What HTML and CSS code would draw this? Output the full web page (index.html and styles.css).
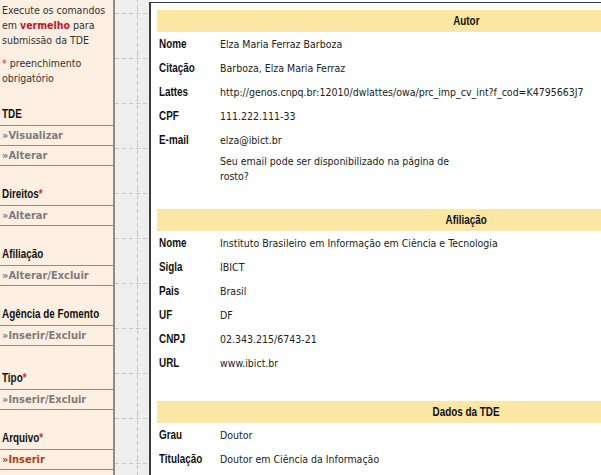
FILE: index.html
```html
<!DOCTYPE html>
<html lang="pt-BR">
<head>
<meta charset="utf-8">
<title>Submissão da TDE</title>
<link rel="stylesheet" href="styles.css">
</head>
<body>
<div class="page">
  <aside class="sidebar">
    <p class="intro">Execute os comandos<br>em <b class="red">vermelho</b> para<br>submissão da TDE</p>
    <p class="intro gap"><span class="ast">*</span> preenchimento<br>obrigatório</p>

    <div class="group-title"><span class="nw">TDE</span></div>
    <ul class="links"><li>»Visualizar</li><li>»Alterar</li></ul>

    <div class="group-title"><span class="nw">Direitos<span class="ast">*</span></span></div>
    <ul class="links"><li>»Alterar</li></ul>

    <div class="group-title"><span class="nw">Afiliação</span></div>
    <ul class="links"><li>»Alterar/Excluir</li></ul>

    <div class="group-title"><span class="nw">Agência de Fomento</span></div>
    <ul class="links"><li>»Inserir/Excluir</li></ul>

    <div class="group-title tall"><span class="nw">Tipo<span class="ast">*</span></span></div>
    <ul class="links"><li>»Inserir/Excluir</li></ul>

    <div class="group-title"><span class="nw">Arquivo<span class="ast">*</span></span></div>
    <ul class="links"><li class="todo">»Inserir</li></ul>
  </aside>

  <div class="gutter">
    <svg class="grid" width="100%" height="100%" aria-hidden="true">
      <defs>
        <pattern id="dash" width="34" height="45" patternUnits="userSpaceOnUse" y="8">
          <line x1="0" y1="5.5" x2="34" y2="5.5" stroke="#c6c6c6" stroke-width="1" stroke-dasharray="4 3"/>
          <line x1="22.5" y1="0" x2="22.5" y2="45" stroke="#c6c6c6" stroke-width="1" stroke-dasharray="4 3"/>
        </pattern>
      </defs>
      <rect width="100%" height="100%" fill="url(#dash)"/>
    </svg>
  </div>

  <main class="panel">
    <section class="sec">
      <h2 class="bar"><span class="nw c">Autor</span></h2>
      <div class="fields">
        <div class="lbl"><span class="nw">Nome</span></div><div class="val">Elza Maria Ferraz Barboza</div>
        <div class="lbl"><span class="nw">Citação</span></div><div class="val">Barboza, Elza Maria Ferraz</div>
        <div class="lbl"><span class="nw">Lattes</span></div><div class="val">http://genos.cnpq.br:12010/dwlattes/owa/prc_imp_cv_int?f_cod=K4795663J7</div>
        <div class="lbl"><span class="nw">CPF</span></div><div class="val">111.222.111-33</div>
        <div class="lbl"><span class="nw">E-mail</span></div><div class="val">elza@ibict.br</div>
        <div class="note">Seu email pode ser disponibilizado na página de<br>rosto?</div>
      </div>
    </section>

    <section class="sec">
      <h2 class="bar"><span class="nw c">Afiliação</span></h2>
      <div class="fields">
        <div class="lbl"><span class="nw">Nome</span></div><div class="val">Instituto Brasileiro em Informação em Ciência e Tecnologia</div>
        <div class="lbl"><span class="nw">Sigla</span></div><div class="val">IBICT</div>
        <div class="lbl"><span class="nw">Pais</span></div><div class="val">Brasil</div>
        <div class="lbl"><span class="nw">UF</span></div><div class="val">DF</div>
        <div class="lbl"><span class="nw">CNPJ</span></div><div class="val">02.343.215/6743-21</div>
        <div class="lbl"><span class="nw">URL</span></div><div class="val">www.ibict.br</div>
      </div>
    </section>

    <section class="sec">
      <h2 class="bar"><span class="nw c">Dados da TDE</span></h2>
      <div class="fields">
        <div class="lbl"><span class="nw">Grau</span></div><div class="val">Doutor</div>
        <div class="lbl"><span class="nw">Titulação</span></div><div class="val">Doutor em Ciência da Informação</div>
      </div>
    </section>
  </main>
</div>
</body>
</html>
```

FILE: styles.css
```css
html, body {
  margin: 0;
  padding: 0;
  overflow: hidden;
  background: #ffffff;
}

body {
  font-family: "DejaVu Sans Condensed", "DejaVu Sans", sans-serif;
  font-size: 10.5px;
  color: #222222;
}

.page {
  display: flex;
  height: 475px;
  width: 800px;
  overflow: hidden;
}

/* narrow bold headings (Arial Narrow look) */
.nw {
  display: inline-block;
  font-family: "Liberation Sans", Arial, sans-serif;
  font-weight: bold;
  font-size: 13px;
  color: #111111;
  white-space: nowrap;
  transform: scaleX(0.76);
  transform-origin: left center;
}

.nw.c {
  transform-origin: center center;
}

/* ---------- sidebar ---------- */
.sidebar {
  flex: 0 0 113px;
  width: 113px;
  min-width: 0;
  overflow: hidden;
  background: #fdefe1;
  border-right: 2px solid #8c8c8c;
  padding-top: 3px;
}

.intro {
  margin: 0;
  padding-left: 2px;
  line-height: 15px;
  color: #333333;
}

.intro.gap {
  margin-top: 8px;
}

.red {
  color: #c8141e;
}

.ast {
  color: #d0302a;
}

.group-title {
  height: 39px;
  display: flex;
  align-items: flex-end;
  box-sizing: border-box;
  padding: 0 0 4px 2px;
  line-height: 14px;
}

.group-title.tall {
  height: 43px;
}

.links {
  list-style: none;
  margin: 0;
  padding: 0;
  border-top: 1px solid #8c8c8c;
}

.links li {
  height: 19px;
  line-height: 19px;
  border-bottom: 1px solid #8c8c8c;
  padding-left: 2px;
  font-size: 11px;
  font-weight: bold;
  color: #7c7c7c;
}

.links li.todo {
  color: #b23c14;
}

/* ---------- gutter ---------- */
.gutter {
  flex: 0 0 34px;
  background: #eeeeee;
}

.grid {
  display: block;
}

/* ---------- panel ---------- */
.panel {
  flex: 0 0 auto;
  width: 618px;
  margin-top: 2px;
  background: #ffffff;
  border-left: 2px solid #3c3c3c;
  border-top: 1px solid #3c3c3c;
  padding: 7px 6px 0 6px;
}

.sec {
  margin-bottom: 26px;
}

.bar {
  margin: 0;
  height: 22px;
  line-height: 22px;
  background: #fbe6a4;
  text-align: center;
  font-size: 13px;
}

.fields {
  display: grid;
  grid-template-columns: 63px 1fr;
  grid-auto-rows: minmax(24px, auto);
  align-items: center;
}

.lbl {
  padding-left: 2px;
  line-height: 16px;
}

.val {
  white-space: nowrap;
  color: #222222;
}

.note {
  grid-column: 2;
  height: 31px;
  align-self: start;
  padding-top: 2px;
  box-sizing: border-box;
  line-height: 15px;
  color: #222222;
}
```
